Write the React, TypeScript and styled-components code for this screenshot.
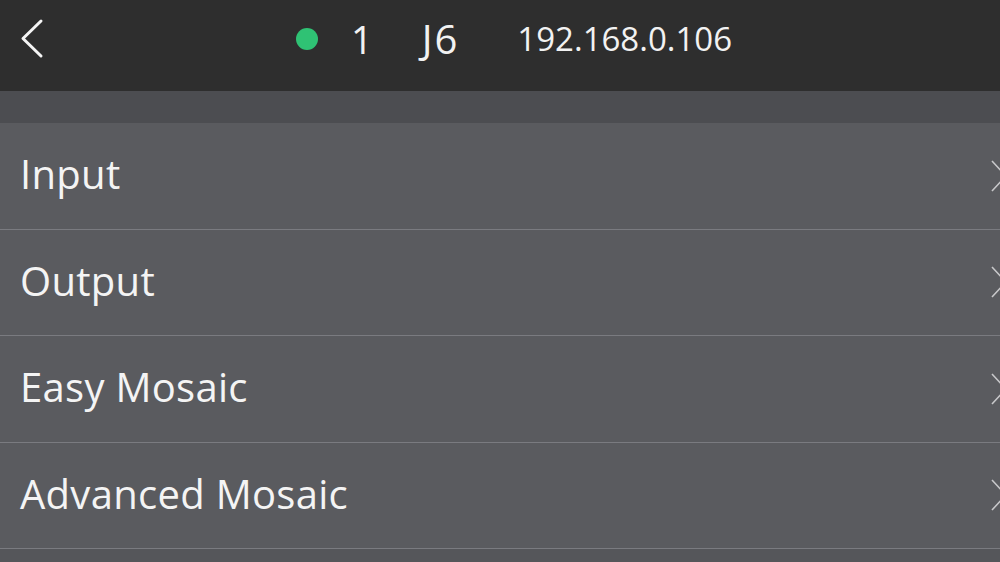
import React from "react";
import styled, { createGlobalStyle } from "styled-components";

const Global = createGlobalStyle`
  html, body { margin: 0; padding: 0; background: #55565a; }
  body { font-family: "Open Sans", "Noto Sans", "Liberation Sans", sans-serif; overflow: hidden; }
  * { box-sizing: border-box; }
`;

const Page = styled.div`
  width: 1000px;
  height: 562px;
  display: flex;
  flex-direction: column;
  background: #55565a;
  overflow: hidden;
`;

const Header = styled.header`
  height: 91px;
  flex: none;
  background: #2e2e2e;
  display: flex;
  align-items: center;
  padding-left: 19px;
  color: #f4f4f4;
`;

const BackButton = styled.button`
  border: 0;
  background: none;
  padding: 0;
  width: 26px;
  height: 42px;
  display: flex;
  align-items: center;
  justify-content: center;
  margin-top: -13px;
  cursor: pointer;
`;

const Status = styled.div`
  display: flex;
  align-items: center;
  margin-left: 251px;
  margin-top: -14px;
`;

const Dot = styled.span`
  width: 22px;
  height: 22px;
  border-radius: 50%;
  background: #2fc274;
  margin-right: 33px;
`;

const HeaderText = styled.span<{ $size: number; $gap: number; $spacing?: number }>`
  font-size: ${(p) => p.$size}px;
  line-height: 1;
  margin-right: ${(p) => p.$gap}px;
  letter-spacing: ${(p) => p.$spacing ?? 0}px;
  color: #f2f2f2;
`;

const Strip = styled.div`
  height: 32px;
  flex: none;
  background: #4c4d51;
`;

const List = styled.ul`
  list-style: none;
  margin: 0;
  padding: 0;
`;

const Row = styled.li`
  height: 106.5px;
  display: flex;
  align-items: center;
  justify-content: space-between;
  padding-left: 20px;
  background: #5a5b5f;
  border-bottom: 1.5px solid #7a7b80;
  position: relative;
`;

const Label = styled.span`
  font-size: 40px;
  color: #f4f4f4;
  letter-spacing: 0.3px;
  margin-top: -4px;
`;

const Chevron = styled.svg`
  position: absolute;
  right: -10px;
  top: 50%;
  transform: translateY(-50%);
`;

const items = ["Input", "Output", "Easy Mosaic", "Advanced Mosaic"];

export default function App() {
  return (
    <Page>
      <Global />
      <Header>
        <BackButton aria-label="back">
          <svg width="26" height="42" viewBox="0 0 26 42">
            <path d="M22 3 L4 20.5 L22 38" fill="none" stroke="#f5f5f5" strokeWidth="3" strokeLinecap="round" strokeLinejoin="round" />
          </svg>
        </BackButton>
        <Status>
          <Dot />
          <HeaderText $size={38} $gap={49}>1</HeaderText>
          <HeaderText $size={40} $gap={58} $spacing={2}>J6</HeaderText>
          <HeaderText $size={33} $gap={0}>192.168.0.106</HeaderText>
        </Status>
      </Header>
      <Strip />
      <List>
        {items.map((t) => (
          <Row key={t}>
            <Label>{t}</Label>
            <Chevron width="20" height="34" viewBox="0 0 20 34">
              <path d="M2 2 L16 17 L2 32" fill="none" stroke="#c8c8ca" strokeWidth="1.6" />
            </Chevron>
          </Row>
        ))}
      </List>
    </Page>
  );
}
